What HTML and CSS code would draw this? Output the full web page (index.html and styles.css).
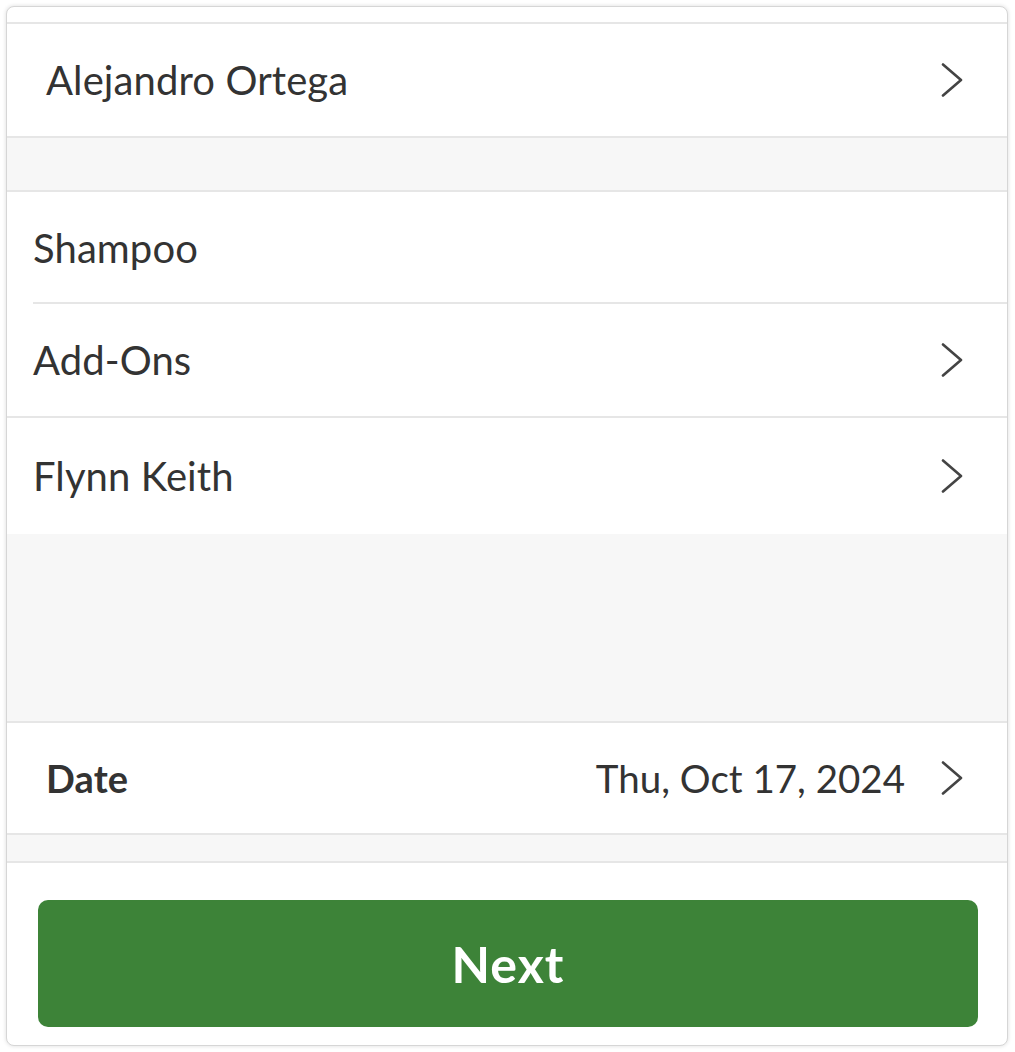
FILE: index.html
```html
<!DOCTYPE html>
<html>
<head>
<meta charset="utf-8">
<link rel="stylesheet" href="styles.css">
</head>
<body>
<div class="card">
  <div class="top-gap"></div>
  <div class="row row-wide row-first line">
    <span class="label">Alejandro Ortega</span>
    <svg class="chev" viewBox="0 0 22 34"><path d="M2 1.5 L20 17 L2 32.5"/></svg>
  </div>
  <div class="band band-a line"></div>
  <div class="group">
    <div class="row inset-line"><span class="label">Shampoo</span></div>
    <div class="row row-mid line">
      <span class="label">Add-Ons</span>
      <svg class="chev" viewBox="0 0 22 34"><path d="M2 1.5 L20 17 L2 32.5"/></svg>
    </div>
    <div class="row row-last">
      <span class="label">Flynn Keith</span>
      <svg class="chev" viewBox="0 0 22 34"><path d="M2 1.5 L20 17 L2 32.5"/></svg>
    </div>
  </div>
  <div class="band band-b line"></div>
  <div class="row row-wide row-date line">
    <span class="label bold">Date</span>
    <span class="value">Thu, Oct 17, 2024</span>
    <svg class="chev" viewBox="0 0 22 34"><path d="M2 1.5 L20 17 L2 32.5"/></svg>
  </div>
  <div class="band band-c line"></div>
  <div class="footer">
    <button class="next">Next</button>
  </div>
</div>
</body>
</html>
```
FILE: styles.css
```css
html, body {
  margin: 0;
  padding: 0;
  background: #ffffff;
}
body {
  padding: 6px 7px 6px 6px;
  font-family: "Lato", "Open Sans", sans-serif;
  color: #333333;
}
.card {
  box-sizing: border-box;
  width: 1002px;
  height: 1040px;
  border: 1px solid #d6d6d6;
  border-radius: 8px;
  box-shadow: 0 0 4px rgba(0, 0, 0, 0.14);
  background: #ffffff;
  overflow: hidden;
  display: flex;
  flex-direction: column;
}
.top-gap {
  height: 15px;
  border-bottom: 2px solid #e6e6e6;
}
.line {
  border-bottom: 2px solid #e6e6e6;
}
.row {
  box-sizing: border-box;
  height: 112px;
  display: flex;
  align-items: center;
  padding: 0 44px 0 26px;
  background: #ffffff;
}
.row-wide {
  padding-left: 39px;
}
.row-first {
  height: 114px;
}
.row-mid {
  height: 114px;
}
.row-last {
  height: 116px;
}
.inset-line {
  position: relative;
  height: 112px;
}
.inset-line::after {
  content: "";
  position: absolute;
  left: 26px;
  right: 0;
  bottom: 0;
  height: 2px;
  background: #e6e6e6;
}
.label {
  font-size: 40px;
  line-height: 1;
  flex: 1;
  letter-spacing: 0.1px;
}
.bold {
  font-weight: 700;
  font-size: 38px;
}
.value {
  font-size: 38.5px;
  line-height: 1;
  margin-right: 36px;
}
.chev {
  width: 22px;
  height: 34px;
  flex: none;
}
.chev path {
  fill: none;
  stroke: #444444;
  stroke-width: 2.6;
  stroke-linecap: round;
  stroke-linejoin: round;
}
.band {
  background: #f7f7f7;
}
.band-a { height: 52px; }
.band-b { height: 187px; }
.band-c { height: 26px; }
.row-date {
  height: 112px;
}
.footer {
  flex: 1;
  padding: 37px 29px 0 31px;
}
.next {
  width: 100%;
  height: 127px;
  border: none;
  border-radius: 10px;
  background: #3d8338;
  color: #ffffff;
  font-family: "Lato", "Open Sans", sans-serif;
  font-size: 50px;
  font-weight: 700;
  letter-spacing: 1px;
}
```
